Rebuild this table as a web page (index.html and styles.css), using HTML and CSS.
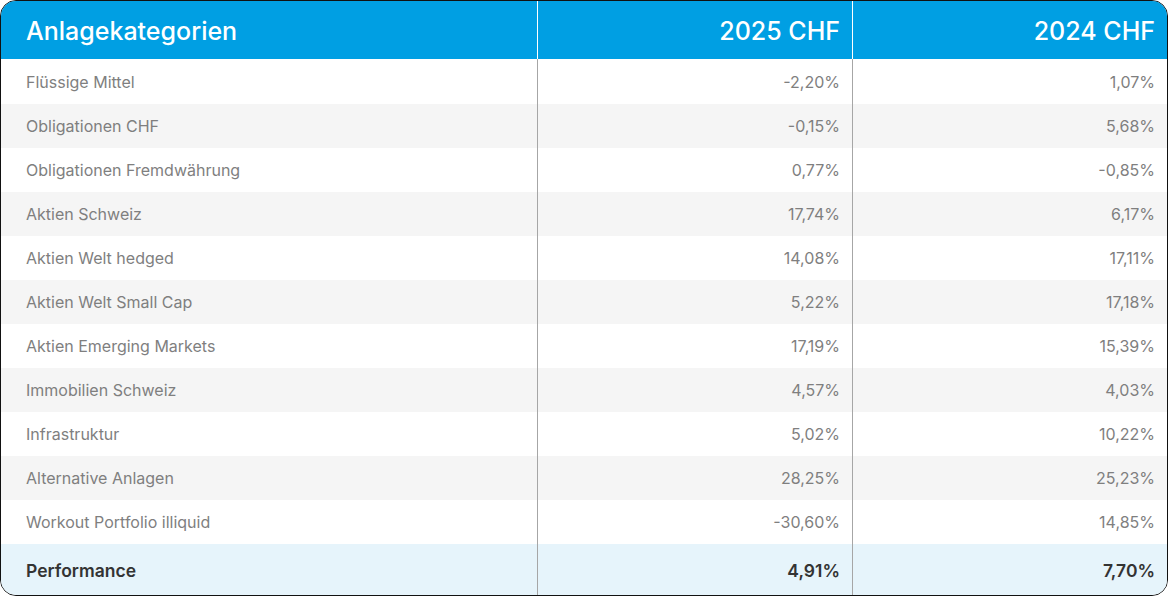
FILE: index.html
```html
<!DOCTYPE html>
<html lang="de">
<head>
<meta charset="utf-8">
<title>Anlagekategorien</title>
<link rel="stylesheet" href="styles.css">
</head>
<body>
<div class="card">
  <div class="row head">
    <div class="cell">Anlagekategorien</div>
    <div class="cell num sep">2025 CHF</div>
    <div class="cell num sep">2024 CHF</div>
  </div>
  <div class="row first"><div class="cell">Flüssige Mittel</div><div class="cell num sep">-2,20%</div><div class="cell num sep">1,07%</div></div>
  <div class="row alt"><div class="cell">Obligationen CHF</div><div class="cell num sep">-0,15%</div><div class="cell num sep">5,68%</div></div>
  <div class="row"><div class="cell">Obligationen Fremdwährung</div><div class="cell num sep">0,77%</div><div class="cell num sep">-0,85%</div></div>
  <div class="row alt"><div class="cell">Aktien Schweiz</div><div class="cell num sep">17,74%</div><div class="cell num sep">6,17%</div></div>
  <div class="row"><div class="cell">Aktien Welt hedged</div><div class="cell num sep">14,08%</div><div class="cell num sep">17,11%</div></div>
  <div class="row alt"><div class="cell">Aktien Welt Small Cap</div><div class="cell num sep">5,22%</div><div class="cell num sep">17,18%</div></div>
  <div class="row"><div class="cell">Aktien Emerging Markets</div><div class="cell num sep">17,19%</div><div class="cell num sep">15,39%</div></div>
  <div class="row alt"><div class="cell">Immobilien Schweiz</div><div class="cell num sep">4,57%</div><div class="cell num sep">4,03%</div></div>
  <div class="row"><div class="cell">Infrastruktur</div><div class="cell num sep">5,02%</div><div class="cell num sep">10,22%</div></div>
  <div class="row alt"><div class="cell">Alternative Anlagen</div><div class="cell num sep">28,25%</div><div class="cell num sep">25,23%</div></div>
  <div class="row"><div class="cell">Workout Portfolio illiquid</div><div class="cell num sep">-30,60%</div><div class="cell num sep">14,85%</div></div>
  <div class="row total"><div class="cell">Performance</div><div class="cell num sep">4,91%</div><div class="cell num sep">7,70%</div></div>
</div>
</body>
</html>
```
FILE: styles.css
```css
html, body {
  margin: 0;
  padding: 0;
  background: #ffffff;
}
body {
  font-family: Inter, "Liberation Sans", Arial, sans-serif;
}
.card {
  box-sizing: border-box;
  width: 1168px;
  height: 596px;
  border: 1px solid #111111;
  border-radius: 16px;
  overflow: hidden;
  background: #ffffff;
}
.row {
  display: grid;
  grid-template-columns: 536px 315px 315px;
  height: 44px;
  font-size: 16px;
  color: #7f7f7f;
}
.row.alt {
  background: #f5f5f5;
}
.cell {
  display: flex;
  align-items: center;
  padding: 0 12px 0 25px;
  box-sizing: border-box;
  white-space: nowrap;
}
.cell.num {
  justify-content: flex-end;
}
.cell.sep {
  border-left: 1px solid #a6a6a6;
}
.row.head {
  height: 58px;
  background: #009fe3;
  color: #ffffff;
  font-size: 25px;
  font-weight: 500;
}
.row.head .cell {
  padding-top: 2px;
}
.row.head .cell.sep {
  border-left-color: #ffffff;
}
.row.first {
  height: 45px;
}
.row.first .cell {
  padding-top: 1px;
}
.row.total {
  height: 51px;
  background: #e6f4fb;
  color: #333333;
  font-size: 17.5px;
  font-weight: 600;
}
.row.total .cell {
  padding-top: 2px;
}
```
